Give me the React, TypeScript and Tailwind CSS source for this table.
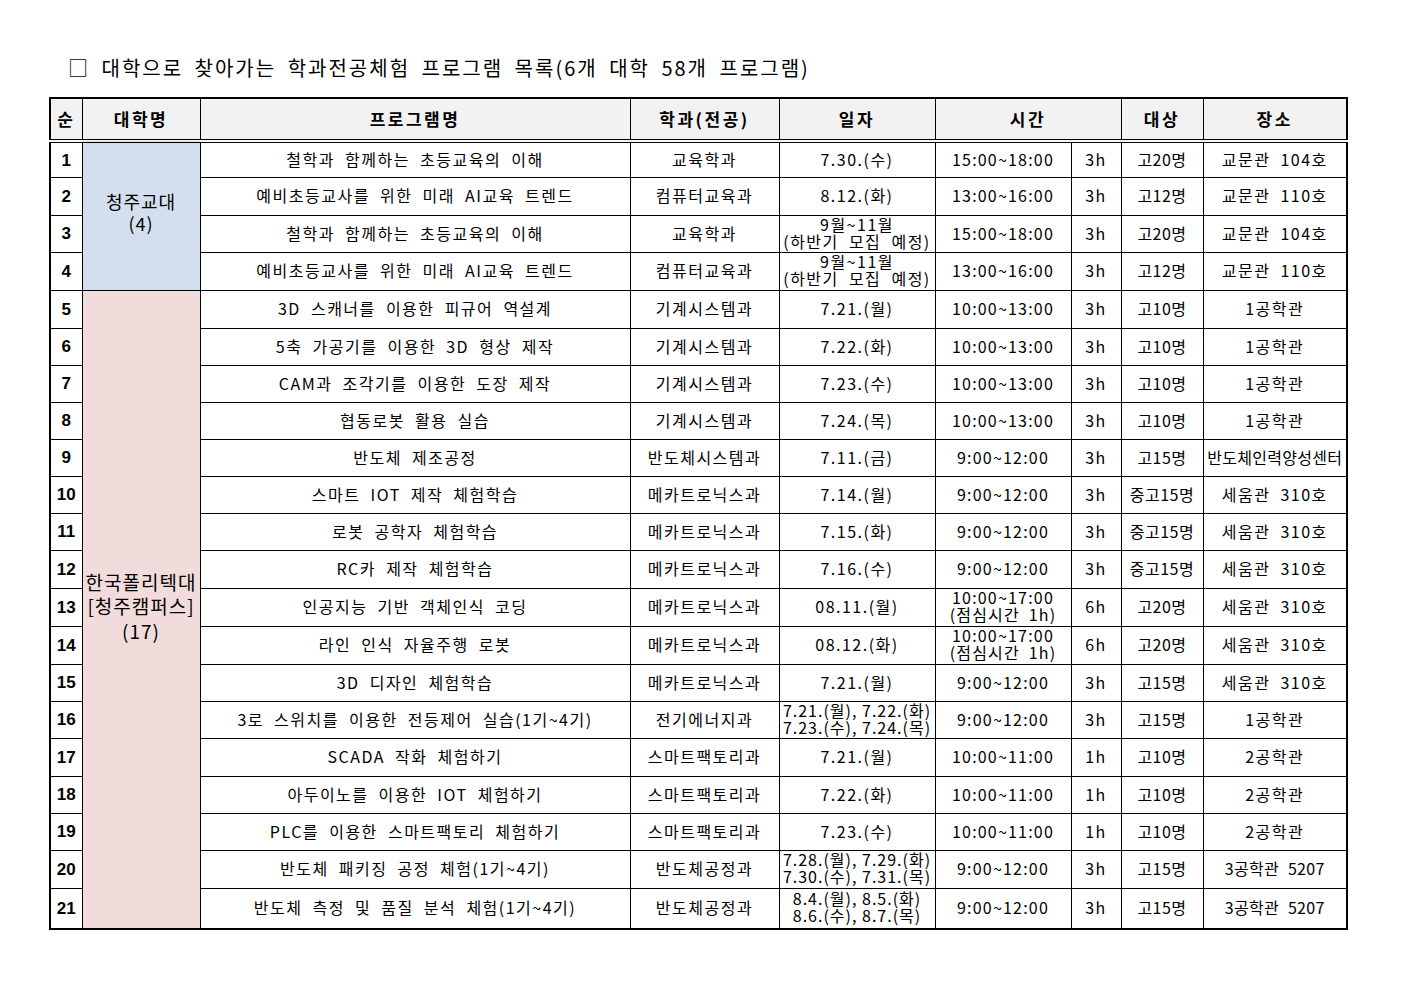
import React from 'react';

type Row = {
  name: string;
  dept: string;
  date: string[];
  time: string[];
  hours: string;
  target: string;
  place: string;
};

const rows: Row[] = [
  { name: '철학과 함께하는 초등교육의 이해', dept: '교육학과', date: ['7.30.(수)'], time: ['15:00~18:00'], hours: '3h', target: '고20명', place: '교문관 104호' },
  { name: '예비초등교사를 위한 미래 AI교육 트렌드', dept: '컴퓨터교육과', date: ['8.12.(화)'], time: ['13:00~16:00'], hours: '3h', target: '고12명', place: '교문관 110호' },
  { name: '철학과 함께하는 초등교육의 이해', dept: '교육학과', date: ['9월~11월', '(하반기 모집 예정)'], time: ['15:00~18:00'], hours: '3h', target: '고20명', place: '교문관 104호' },
  { name: '예비초등교사를 위한 미래 AI교육 트렌드', dept: '컴퓨터교육과', date: ['9월~11월', '(하반기 모집 예정)'], time: ['13:00~16:00'], hours: '3h', target: '고12명', place: '교문관 110호' },
  { name: '3D 스캐너를 이용한 피규어 역설계', dept: '기계시스템과', date: ['7.21.(월)'], time: ['10:00~13:00'], hours: '3h', target: '고10명', place: '1공학관' },
  { name: '5축 가공기를 이용한 3D 형상 제작', dept: '기계시스템과', date: ['7.22.(화)'], time: ['10:00~13:00'], hours: '3h', target: '고10명', place: '1공학관' },
  { name: 'CAM과 조각기를 이용한 도장 제작', dept: '기계시스템과', date: ['7.23.(수)'], time: ['10:00~13:00'], hours: '3h', target: '고10명', place: '1공학관' },
  { name: '협동로봇 활용 실습', dept: '기계시스템과', date: ['7.24.(목)'], time: ['10:00~13:00'], hours: '3h', target: '고10명', place: '1공학관' },
  { name: '반도체 제조공정', dept: '반도체시스템과', date: ['7.11.(금)'], time: ['9:00~12:00'], hours: '3h', target: '고15명', place: '반도체인력양성센터' },
  { name: '스마트 IOT 제작 체험학습', dept: '메카트로닉스과', date: ['7.14.(월)'], time: ['9:00~12:00'], hours: '3h', target: '중고15명', place: '세움관 310호' },
  { name: '로봇 공학자 체험학습', dept: '메카트로닉스과', date: ['7.15.(화)'], time: ['9:00~12:00'], hours: '3h', target: '중고15명', place: '세움관 310호' },
  { name: 'RC카 제작 체험학습', dept: '메카트로닉스과', date: ['7.16.(수)'], time: ['9:00~12:00'], hours: '3h', target: '중고15명', place: '세움관 310호' },
  { name: '인공지능 기반 객체인식 코딩', dept: '메카트로닉스과', date: ['08.11.(월)'], time: ['10:00~17:00', '(점심시간 1h)'], hours: '6h', target: '고20명', place: '세움관 310호' },
  { name: '라인 인식 자율주행 로봇', dept: '메카트로닉스과', date: ['08.12.(화)'], time: ['10:00~17:00', '(점심시간 1h)'], hours: '6h', target: '고20명', place: '세움관 310호' },
  { name: '3D 디자인 체험학습', dept: '메카트로닉스과', date: ['7.21.(월)'], time: ['9:00~12:00'], hours: '3h', target: '고15명', place: '세움관 310호' },
  { name: '3로 스위치를 이용한 전등제어 실습(1기~4기)', dept: '전기에너지과', date: ['7.21.(월), 7.22.(화)', '7.23.(수), 7.24.(목)'], time: ['9:00~12:00'], hours: '3h', target: '고15명', place: '1공학관' },
  { name: 'SCADA 작화 체험하기', dept: '스마트팩토리과', date: ['7.21.(월)'], time: ['10:00~11:00'], hours: '1h', target: '고10명', place: '2공학관' },
  { name: '아두이노를 이용한 IOT 체험하기', dept: '스마트팩토리과', date: ['7.22.(화)'], time: ['10:00~11:00'], hours: '1h', target: '고10명', place: '2공학관' },
  { name: 'PLC를 이용한 스마트팩토리 체험하기', dept: '스마트팩토리과', date: ['7.23.(수)'], time: ['10:00~11:00'], hours: '1h', target: '고10명', place: '2공학관' },
  { name: '반도체 패키징 공정 체험(1기~4기)', dept: '반도체공정과', date: ['7.28.(월), 7.29.(화)', '7.30.(수), 7.31.(목)'], time: ['9:00~12:00'], hours: '3h', target: '고15명', place: '3공학관 5207' },
  { name: '반도체 측정 및 품질 분석 체험(1기~4기)', dept: '반도체공정과', date: ['8.4.(월), 8.5.(화)', '8.6.(수), 8.7.(목)'], time: ['9:00~12:00'], hours: '3h', target: '고15명', place: '3공학관 5207' },
];

const heights = [36, 38, 37, 38, 38, 37, 37, 37, 37, 37, 37, 38, 38, 38, 37, 37, 38, 37, 37, 38, 41];

const cell = 'border border-black text-center align-middle p-0 whitespace-nowrap';
const td = `${cell} pb-[2px]`;
const th = 'border border-black border-b-[4px] [border-bottom-style:double] bg-[#f2f2f2] text-center align-middle p-0 font-bold text-[17px] tracking-[2.5px]';

const Lines: React.FC<{ lines: string[]; tight?: boolean }> = ({ lines, tight }) =>
  lines.length === 1 ? (
    <>{lines[0]}</>
  ) : (
    <div className={`flex flex-col items-center leading-[17px] ${tight ? 'tracking-[1px] [word-spacing:0px]' : ''}`}>
      {lines.map((l, i) => (
        <span key={i}>{l}</span>
      ))}
    </div>
  );

const App: React.FC = () => {
  return (
    <div className="min-h-screen bg-white text-black font-['Noto_Sans_CJK_KR',sans-serif] pt-[53px]">
      <h1 className="ml-[68px] text-[20px] leading-[30px] tracking-[2px] [word-spacing:5px] font-normal">
        □ 대학으로 찾아가는 학과전공체험 프로그램 목록(6개 대학 58개 프로그램)
      </h1>
      <table className="ml-[49px] mt-[14px] w-[1297px] table-fixed border-collapse border-2 border-black text-[16px] tracking-[1.5px] [word-spacing:5px]">
        <colgroup>
          <col className="w-[32px]" />
          <col className="w-[118px]" />
          <col className="w-[430px]" />
          <col className="w-[149px]" />
          <col className="w-[156px]" />
          <col className="w-[136px]" />
          <col className="w-[50px]" />
          <col className="w-[82px]" />
          <col className="w-[144px]" />
        </colgroup>
        <thead>
          <tr className="h-[43px]">
            <th className={th}>순</th>
            <th className={th}>대학명</th>
            <th className={th}>프로그램명</th>
            <th className={`${th} tracking-[1px]`}>학과(전공)</th>
            <th className={th}>일자</th>
            <th className={th} colSpan={2}>시간</th>
            <th className={th}>대상</th>
            <th className={th}>장소</th>
          </tr>
        </thead>
        <tbody>
          {rows.map((r, i) => (
            <tr key={i} style={{ height: heights[i] }}>
              <td className={`${cell} pt-[1px] font-['Liberation_Sans',sans-serif] font-bold text-[17px] tracking-normal`}>{i + 1}</td>
              {i === 0 && (
                <td rowSpan={4} className={`${td} bg-[#d3dfee] text-[18px] leading-[22px] tracking-[1px]`}>
                  <div className="flex flex-col items-center pb-[6px]">
                    <span>청주교대</span>
                    <span>(4)</span>
                  </div>
                </td>
              )}
              {i === 4 && (
                <td rowSpan={17} className={`${td} bg-[#f2dcdb] text-[19px] leading-[24.5px] tracking-[1px]`}>
                  <div className="flex flex-col items-center pb-[4px]">
                    <span>한국폴리텍대</span>
                    <span>[청주캠퍼스]</span>
                    <span>(17)</span>
                  </div>
                </td>
              )}
              <td className={td}>{r.name}</td>
              <td className={td}>{r.dept}</td>
              <td className={td}>
                <Lines lines={r.date} tight={r.date[0].includes(',')} />
              </td>
              <td className={`${td} tracking-[1.2px] [word-spacing:4px]`}>
                <Lines lines={r.time} />
              </td>
              <td className={td}>{r.hours}</td>
              <td className={`${td} tracking-[0.5px]`}>{r.target}</td>
              <td className={`${td} ${r.place.length > 8 ? 'tracking-[0.3px]' : ''}`}>{r.place}</td>
            </tr>
          ))}
        </tbody>
      </table>
    </div>
  );
};

export default App;
